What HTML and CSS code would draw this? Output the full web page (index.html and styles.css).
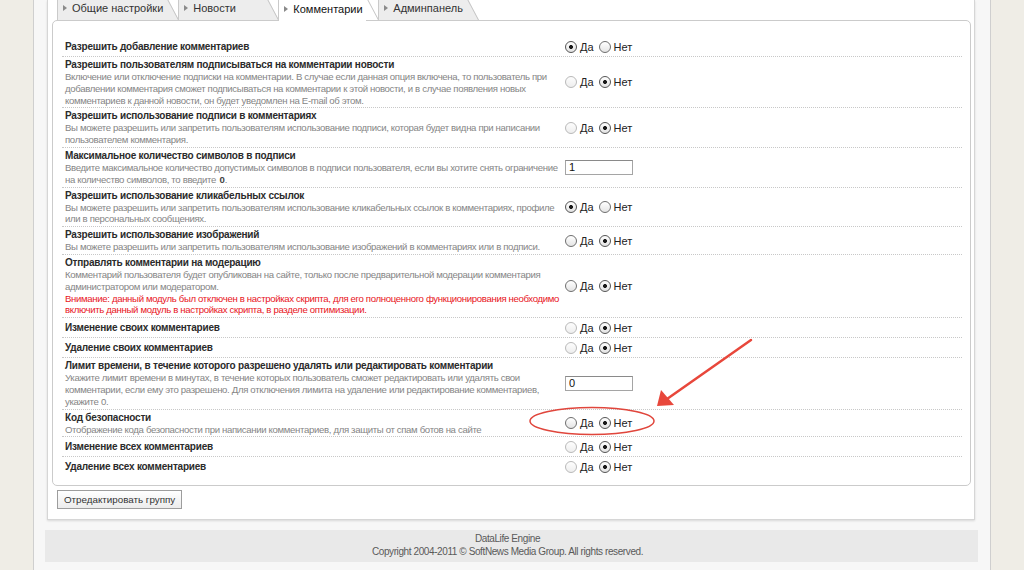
FILE: index.html
```html
<!DOCTYPE html>
<html lang="ru">
<head>
    <meta charset="UTF-8">
    <title>Настройки группы</title>
    <link rel="stylesheet" href="styles.css">
</head>
<body>
<div class="page">
    <div class="panel">
        <div class="tabs">
            <a class="tab">Общие настройки</a>
            <a class="tab">Новости</a>
            <a class="tab active">Комментарии</a>
            <a class="tab">Админпанель</a>
        </div>
        <div class="card">
            <div class="opt">
                <div class="opt-text"><div class="opt-title">Разрешить добавление комментариев</div></div>
                <div class="opt-ctl">
                    <label><input type="radio" name="r1" checked> Да</label>
                    <label><input type="radio" name="r1"> Нет</label>
                </div>
            </div>
            <div class="opt">
                <div class="opt-text">
                    <div class="opt-title">Разрешить пользователям подписываться на комментарии новости</div>
                    <div class="opt-desc">Включение или отключение подписки на комментарии. В случае если данная опция включена, то пользователь при добавлении комментария сможет подписываться на комментарии к этой новости, и в случае появления новых комментариев к данной новости, он будет уведомлен на E-mail об этом.</div>
                </div>
                <div class="opt-ctl">
                    <label><input type="radio" name="r2" class="dim"> Да</label>
                    <label><input type="radio" name="r2" checked> Нет</label>
                </div>
            </div>
            <div class="opt">
                <div class="opt-text">
                    <div class="opt-title">Разрешить использование подписи в комментариях</div>
                    <div class="opt-desc">Вы можете разрешить или запретить пользователям использование подписи, которая будет видна при написании пользователем комментария.</div>
                </div>
                <div class="opt-ctl">
                    <label><input type="radio" name="r3" class="dim"> Да</label>
                    <label><input type="radio" name="r3" checked> Нет</label>
                </div>
            </div>
            <div class="opt">
                <div class="opt-text">
                    <div class="opt-title">Максимальное количество символов в подписи</div>
                    <div class="opt-desc">Введите максимальное количество допустимых символов в подписи пользователя, если вы хотите снять ограничение на количество символов, то введите <b>0</b>.</div>
                </div>
                <div class="opt-ctl"><input type="text" class="num" value="1"></div>
            </div>
            <div class="opt">
                <div class="opt-text">
                    <div class="opt-title">Разрешить использование кликабельных ссылок</div>
                    <div class="opt-desc">Вы можете разрешить или запретить пользователям использование кликабельных ссылок в комментариях, профиле или в персональных сообщениях.</div>
                </div>
                <div class="opt-ctl">
                    <label><input type="radio" name="r5" checked> Да</label>
                    <label><input type="radio" name="r5"> Нет</label>
                </div>
            </div>
            <div class="opt">
                <div class="opt-text">
                    <div class="opt-title">Разрешить использование изображений</div>
                    <div class="opt-desc">Вы можете разрешить или запретить пользователям использование изображений в комментариях или в подписи.</div>
                </div>
                <div class="opt-ctl">
                    <label><input type="radio" name="r6"> Да</label>
                    <label><input type="radio" name="r6" checked> Нет</label>
                </div>
            </div>
            <div class="opt">
                <div class="opt-text">
                    <div class="opt-title">Отправлять комментарии на модерацию</div>
                    <div class="opt-desc">Комментарий пользователя будет опубликован на сайте, только после предварительной модерации комментария администратором или модератором.</div>
                    <div class="opt-warn">Внимание: данный модуль был отключен в настройках скрипта, для его полноценного функционирования необходимо включить данный модуль в настройках скрипта, в разделе оптимизации.</div>
                </div>
                <div class="opt-ctl">
                    <label><input type="radio" name="r7"> Да</label>
                    <label><input type="radio" name="r7" checked> Нет</label>
                </div>
            </div>
            <div class="opt">
                <div class="opt-text"><div class="opt-title">Изменение своих комментариев</div></div>
                <div class="opt-ctl">
                    <label><input type="radio" name="r8" class="dim"> Да</label>
                    <label><input type="radio" name="r8" checked> Нет</label>
                </div>
            </div>
            <div class="opt">
                <div class="opt-text"><div class="opt-title">Удаление своих комментариев</div></div>
                <div class="opt-ctl">
                    <label><input type="radio" name="r9" class="dim"> Да</label>
                    <label><input type="radio" name="r9" checked> Нет</label>
                </div>
            </div>
            <div class="opt">
                <div class="opt-text">
                    <div class="opt-title">Лимит времени, в течение которого разрешено удалять или редактировать комментарии</div>
                    <div class="opt-desc">Укажите лимит времени в минутах, в течение которых пользователь сможет редактировать или удалять свои комментарии, если ему это разрешено. Для отключения лимита на удаление или редактирование комментариев, укажите 0.</div>
                </div>
                <div class="opt-ctl"><input type="text" class="num" value="0"></div>
            </div>
            <div class="opt">
                <div class="opt-text">
                    <div class="opt-title">Код безопасности</div>
                    <div class="opt-desc">Отображение кода безопасности при написании комментариев, для защиты от спам ботов на сайте</div>
                </div>
                <div class="opt-ctl">
                    <label><input type="radio" name="r11"> Да</label>
                    <label><input type="radio" name="r11" checked> Нет</label>
                </div>
            </div>
            <div class="opt">
                <div class="opt-text"><div class="opt-title">Изменение всех комментариев</div></div>
                <div class="opt-ctl">
                    <label><input type="radio" name="r12" class="dim"> Да</label>
                    <label><input type="radio" name="r12" checked> Нет</label>
                </div>
            </div>
            <div class="opt">
                <div class="opt-text"><div class="opt-title">Удаление всех комментариев</div></div>
                <div class="opt-ctl">
                    <label><input type="radio" name="r13" class="dim"> Да</label>
                    <label><input type="radio" name="r13" checked> Нет</label>
                </div>
            </div>
        </div>
        <button class="btn">Отредактировать группу</button>
    </div>
    <div class="footer">
        DataLife Engine<br>
        Copyright 2004-2011 &copy; SoftNews Media Group. All rights reserved.
    </div>
</div>
<!-- red annotation drawn over the screenshot -->
<svg class="annot" width="1024" height="570" viewBox="0 0 1024 570">
    <line x1="751" y1="340" x2="667" y2="399" stroke="#e8473b" stroke-width="2.5" stroke-linecap="round"/>
    <polygon points="657,406 661,390 674,405" fill="#e8473b"/>
    <ellipse cx="592" cy="421" rx="62" ry="13.5" fill="none" stroke="#e0463c" stroke-width="1.5"/>
</svg>
</body>
</html>
```

FILE: styles.css
```css
body {
    margin: 0;
    background: #efede6;
    font-family: 'Liberation Sans', Arial, sans-serif;
    font-size: 11px;
    color: #333;
    position: relative;
    height: 570px;
    overflow: hidden;
}
.page {
    margin-left: 33px;
    width: 956px;
    min-height: 570px;
    background: #f7f7f7;
    border-left: 1px solid #cfcfcf;
    border-right: 1px solid #cfcfcf;
}
.panel {
    margin: 0 15px 0 13px;
    padding: 0 3px 10px 4px;
    background: #fff;
    border: 1px solid #d6d6d6;
    border-top: none;
    box-shadow: 0 1px 2px rgba(0, 0, 0, 0.12);
}
.tabs {
    display: flex;
    margin-left: 5px;
    height: 20px;
    position: relative;
    z-index: 1;
}
.tab {
    position: relative;
    display: flex;
    align-items: center;
    box-sizing: border-box;
    min-width: 88px;
    height: 24px;
    margin-top: -4px;
    padding: 0 3px 0 5px;
    margin-right: 12px;
    background: #ededed;
    border-left: 1px solid #cacaca;
    color: #333;
    font-size: 11px;
    cursor: pointer;
}
.tab::before {
    content: '';
    border-left: 4px solid #8a8a8a;
    border-top: 3px solid transparent;
    border-bottom: 3px solid transparent;
    margin-right: 5px;
}
.tab::after {
    content: '';
    position: absolute;
    top: 0;
    right: -13px;
    width: 18px;
    height: 24px;
    background: inherit;
    border-right: 1px solid #c4c4c4;
    transform: skewX(28deg);
    transform-origin: bottom left;
    z-index: -1;
}
.tab.active {
    background: #fff;
    color: #111;
    height: 25px;
}
.card {
    border: 1px solid #cbcbcb;
    border-radius: 5px;
    padding: 16px 8px 9px 9px;
    background: #fff;
}
.opt {
    display: grid;
    grid-template-columns: 503px 1fr;
    align-items: center;
    min-height: 19px;
    border-bottom: 1px dotted #c8c8c8;
}
.opt:last-child {
    border-bottom: none;
}
.opt-text {
    padding: 2px 3px 1px 3px;
}
.opt-title {
    font-weight: bold;
    line-height: 12px;
    letter-spacing: -0.22px;
    font-size: 10px;
    color: #2b2b2b;
}
.opt-desc, .opt-warn {
    font-size: 9.6px;
    line-height: 11.8px;
    letter-spacing: -0.34px;
    color: #858585;
}
.opt-desc b {
    display: inline-block;
    margin-left: 1px;
    color: #444;
    letter-spacing: 0;
}
.opt-warn {
    color: #e8141c;
}
.opt-ctl {
    display: flex;
    align-items: center;
    gap: 5px;
    font-size: 11px;
    color: #222;
}
.opt-ctl label {
    display: flex;
    align-items: center;
    gap: 3px;
}
input[type=radio] {
    appearance: none;
    -webkit-appearance: none;
    margin: 0;
    width: 12px;
    height: 12px;
    border: 1px solid #6e6e6e;
    border-radius: 50%;
    background: linear-gradient(#fff, #e4e4e4);
    box-sizing: border-box;
}
input[type=radio].dim {
    border-color: #b9b9b9;
    background: linear-gradient(#fdfdfd, #eeeeee);
}
input[type=radio]:checked {
    border-color: #555;
    background: radial-gradient(circle, #1a1a1a 0 1.6px, transparent 2.3px), linear-gradient(#fff, #e2e2e2);
}
.num {
    width: 68px;
    height: 15px;
    box-sizing: border-box;
    margin: 0;
    padding: 0 3px;
    border: 1px solid #a5a5a5;
    border-top-color: #8a8a8a;
    font-family: 'Liberation Sans', Arial, sans-serif;
    font-size: 11px;
    color: #111;
}
.btn {
    display: block;
    margin: 4px 0 0 5px;
    height: 19px;
    padding: 0 6px;
    background: linear-gradient(#fff, #ececec);
    border: 1px solid #9d9d9d;
    font-family: 'Liberation Sans', Arial, sans-serif;
    font-size: 9.8px;
    color: #333;
    cursor: pointer;
}
.footer {
    margin: 10px 12px 0 11px;
    height: 32px;
    box-sizing: border-box;
    padding: 3px 8px 0 0;
    background: #e9e9e9;
    text-align: center;
    font-size: 10px;
    line-height: 12.5px;
    letter-spacing: -0.4px;
    color: #5a5a5a;
}
.annot {
    position: absolute;
    top: 0;
    left: 0;
    pointer-events: none;
}
```
